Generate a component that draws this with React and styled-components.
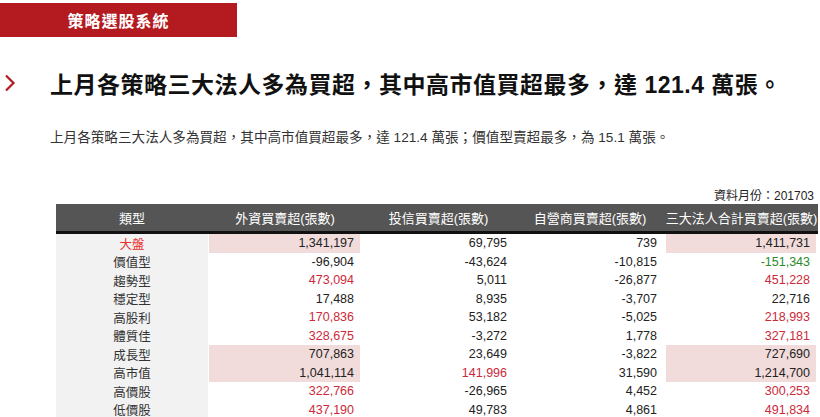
import React from "react";
import styled, { createGlobalStyle } from "styled-components";

const G = createGlobalStyle`
  body { margin: 0; background: #fff; font-family: "Liberation Sans", "Noto Sans CJK TC", sans-serif; }
`;
const Page = styled.div`padding-top: 3px;`;
const Banner = styled.div`
  width: 237px; height: 34px; background: #b31b20; color: #fff;
  font-size: 16px; font-weight: bold; display: flex; align-items: center; justify-content: center;
  letter-spacing: 1px;
`;
const TitleRow = styled.div`
  display: flex; align-items: center; margin-top: 30px; height: 32px;
`;
const Chevron = styled.svg`width: 12px; height: 18px; margin-left: 4px; margin-right: 34px;`;
const Title = styled.h1`margin: 0; font-size: 23px; font-weight: bold; color: #111; letter-spacing: 0.5px;`;
const Sub = styled.p`margin: 27px 0 0 50px; font-size: 13.6px; color: #333;`;
const Note = styled.div`text-align: right; font-size: 12px; color: #222; margin: 40px 6px 1px 0;`;
const Table = styled.div`
  margin-left: 56px; width: 762px; display: grid;
  grid-template-columns: 152px 154px 153px 150px 153px; font-size: 12.5px;
`;
const Head = styled.div`
  background: #555; color: #fff; height: 27px; display: flex; align-items: center; justify-content: center;
  border-bottom: 3px solid #111; font-size: 13px;
`;
const TypeCell = styled.div`
  background: #f2f2f2; height: 18.5px; display: flex; align-items: center; justify-content: center;
  color: ${p => (p.$red ? "#e83030" : "#333")};
`;
const Num = styled.div`
  height: 18.5px; display: flex; align-items: center; justify-content: flex-end; padding-right: 6px;
  color: ${p => (p.$c === "r" ? "#cc2a3a" : p.$c === "g" ? "#2a8a2a" : "#222")};
  background: ${p => (p.$hl ? "#f2dcdb" : "transparent")};
  margin: 0 2px 0 1px;
`;

const rows = [
  ["大盤", ["1,341,197", "", 1], ["69,795"], ["739"], ["1,411,731", "", 1], true],
  ["價值型", ["-96,904"], ["-43,624"], ["-10,815"], ["-151,343", "g"]],
  ["趨勢型", ["473,094", "r"], ["5,011"], ["-26,877"], ["451,228", "r"]],
  ["穩定型", ["17,488"], ["8,935"], ["-3,707"], ["22,716"]],
  ["高股利", ["170,836", "r"], ["53,182"], ["-5,025"], ["218,993", "r"]],
  ["體質佳", ["328,675", "r"], ["-3,272"], ["1,778"], ["327,181", "r"]],
  ["成長型", ["707,863", "", 1], ["23,649"], ["-3,822"], ["727,690", "", 1]],
  ["高市值", ["1,041,114", "", 1], ["141,996", "r"], ["31,590"], ["1,214,700", "", 1]],
  ["高價股", ["322,766", "r"], ["-26,965"], ["4,452"], ["300,253", "r"]],
  ["低價股", ["437,190", "r"], ["49,783"], ["4,861"], ["491,834", "r"]],
];
const heads = ["類型", "外資買賣超(張數)", "投信買賣超(張數)", "自營商買賣超(張數)", "三大法人合計買賣超(張數)"];

export default function App() {
  return (
    <Page>
      <G />
      <Banner>策略選股系統</Banner>
      <TitleRow>
        <Chevron viewBox="0 0 12 18"><path d="M2 1.5 L9.5 9 L2 16.5" fill="none" stroke="#b31b20" strokeWidth="2.2" /></Chevron>
        <Title>上月各策略三大法人多為買超，其中高市值買超最多，達 121.4 萬張。</Title>
      </TitleRow>
      <Sub>上月各策略三大法人多為買超，其中高市值買超最多，達 121.4 萬張；價值型賣超最多，為 15.1 萬張。</Sub>
      <Note>資料月份：201703</Note>
      <Table>
        {heads.map(h => <Head key={h}>{h}</Head>)}
        {rows.map(r => (
          <React.Fragment key={r[0]}>
            <TypeCell $red={r[5]}>{r[0]}</TypeCell>
            {r.slice(1, 5).map((c, i) => <Num key={i} $c={c[1]} $hl={c[2]}>{c[0]}</Num>)}
          </React.Fragment>
        ))}
      </Table>
    </Page>
  );
}
